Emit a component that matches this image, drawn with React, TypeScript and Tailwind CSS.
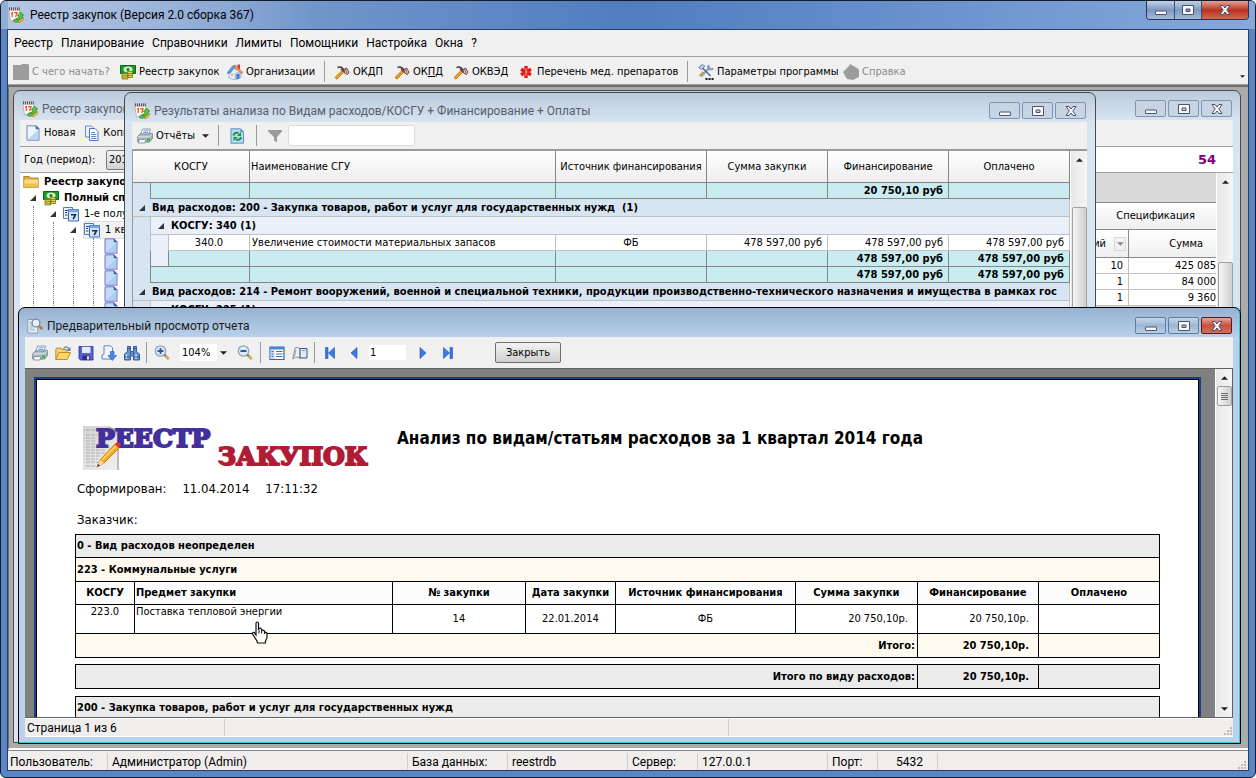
import type { ReactNode } from "react";

/* ---------- icons ---------- */

function Svg({ children, s = 16 }: { children: ReactNode; s?: number }) {
  return (
    <svg viewBox="0 0 16 16" width={s} height={s} className="shrink-0" aria-hidden="true">
      {children}
    </svg>
  );
}

const AppIcon = () => (
  <Svg>
    <path d="M.5 1.500h11l1.500 11-10.500 1.500z" fill="#fbfbfb" stroke="#a9a9b2" strokeWidth=".8" />
    <path d="M.6 1.500h11l.4 2.500H1z" fill="#c9c9cf" />
    <path d="M1.500.3v3M3.500.3v3M5.500.3v3M7.500.3v3M9.500.3v3M11.300.3v3" stroke="#4c4c54" strokeWidth=".9" />
    <path d="M3 6.200l1.300-.7v4.500M6 5.700h3L7.700 10" fill="none" stroke="#ea5a1e" strokeWidth="1.300" />
    <path d="M7.500 12l3-1.500v-2H9.300L12.500 5l3.200 3.200h-1.400v3l-4.300 2.500z" fill="#58c244" stroke="#227a1c" strokeWidth=".6" />
    <path d="M8.500 13.500q3.500 1 7-3l.3 1.700q-2 3-5 3.600z" fill="#f2c838" stroke="#a4791a" strokeWidth=".6" />
    <ellipse cx="8" cy="13.700" rx="2.800" ry="1.500" fill="#5fbf4a" stroke="#2a7a22" strokeWidth=".6" />
  </Svg>
);
const MoneyIcon = () => (
  <Svg>
    <path d="M.5 1.500h15v8h-15z" fill="#1d9a2b" stroke="#086a14" />
    <ellipse cx="8" cy="5.500" rx="4.500" ry="3" fill="#d3f2c4" />
    <circle cx="8" cy="5.500" r="1.500" fill="#1d7a2b" />
    <path d="M2 9.500h6v5.500H2zM7.500 7.500h5V13.500h-5z" fill="#e7d84a" stroke="#80751b" strokeWidth=".8" />
    <path d="M2 11.300h6M2 13.200h6M8 9.500h5M8 11.500h5" stroke="#80751b" strokeWidth=".8" />
  </Svg>
);
const HouseIcon = () => (
  <Svg>
    <path d="M10.500.5h2.500v5h-2.500z" fill="#c0462a" />
    <path d="M2 8.500L6 4l8 4v5.500L8 16l-6-2z" fill="#e8f0fb" stroke="#7e95b8" strokeWidth=".6" />
    <path d="M7.500 9l6.500-1.500v6L7.500 16z" fill="#a9c6ec" />
    <path d="M0 9l5.500-7L9 1.200 3 9.500z" fill="#5b96e4" stroke="#2f66b4" strokeWidth=".5" />
    <path d="M8.500 1.200L16 8.500l-1.300 1L7 3.500z" fill="#f2934a" stroke="#bf5b1c" strokeWidth=".5" />
    <path d="M9.500 10h3v4.500l-3 1z" fill="#4f7cbc" />
    <path d="M4 9.500h2v2.500H4z" fill="#f3b65c" />
  </Svg>
);
const PickIcon = () => (
  <Svg>
    <path d="M1 13.500l7-7 1.800 1.700-6.800 7z" fill="#f0a01c" stroke="#a5660c" strokeWidth=".7" />
    <path d="M3.500 3.500c3.500-1.500 6 .5 7 4.500" fill="none" stroke="#4e3a36" strokeWidth="1.500" />
    <path d="M7 4.500l2.500 3" stroke="#6a3a28" strokeWidth="1.600" />
    <path d="M10 5.500l2.500-1.500 2.500 4-1.500 2.500-3-1.500z" fill="#d9cdcd" stroke="#573434" strokeWidth=".9" />
    <path d="M11.500 5l1.500 4" stroke="#9e4d4d" strokeWidth=".9" />
  </Svg>
);
const MedIcon = () => (
  <Svg>
    <g stroke="#e01818" strokeWidth="3.400">
      <path d="M8 2v12M3 5.200l10 5.600M13 5.200L3 10.800" />
    </g>
    <path d="M8 4v8M7 6.500q2 0 2 1.500t-2 1.500" stroke="#ff9c9c" fill="none" strokeWidth=".9" />
  </Svg>
);
const ToolsIcon = () => (
  <Svg>
    <path d="M3 12.500L12 3" stroke="#8ea2c0" strokeWidth="2.200" />
    <path d="M11 1.200q-2 2 0 3.600 2 1.500 4.200-.5" fill="none" stroke="#7f97ba" strokeWidth="1.800" />
    <path d="M3.500 3l9 9" stroke="#5a6b85" strokeWidth="1.600" />
    <path d="M.5 3.500L4 .5l3 1.500-3.500 3.500z" fill="#b9c9de" stroke="#5d77a0" strokeWidth=".8" />
    <path d="M1.500 12l4-4" stroke="#c99c4a" strokeWidth="2" />
    <path d="M7.500 14h2v2h-2zM10.500 14h2v2h-2zM13.500 14h2v2h-2z" fill="#111" />
  </Svg>
);
const DocIcon = ({ blue = false }: { blue?: boolean }) => (
  <Svg>
    <path d="M2 .8h9l3 3v11.400H2z" fill={blue ? "#c5dcf8" : "#eef4fd"} stroke={blue ? "#7c6fc0" : "#7189b8"} />
    <path d="M3 14.500l10.500-10v10z" fill="#9cc0f0" opacity=".6" />
    <path d="M11 .8v3h3z" fill="#3f6cb8" stroke="#3f5f9d" strokeWidth=".8" />
  </Svg>
);
const CopyIcon = () => (
  <Svg>
    <path d="M1.500 1h6l1.500 1.500V12H1.500z" fill="#eaf2fc" stroke="#6b8cbf" />
    <path d="M5.500 3.500h5.500l3 3v9h-8.500z" fill="#fff" stroke="#4d76b3" />
    <path d="M7 7.500h4M7 9.500h5.500M7 11.500h5.500M7 13.500h5.500" stroke="#5f8fd0" />
  </Svg>
);
const PrintIcon = () => (
  <Svg>
    <path d="M5.500 1h8L11.500 7h-8z" fill="#fff" stroke="#7e8ea6" strokeWidth=".9" />
    <path d="M6.500 2.800h5M6 4.500h5" stroke="#6da0df" />
    <path d="M.8 8.500L3.500 6h9L15.300 5v5.500L12.500 14H.8z" fill="#b4bdc9" stroke="#65738a" strokeWidth=".9" />
    <path d="M.8 8.700h11.700L15.300 5.300" fill="none" stroke="#dfe5ec" strokeWidth=".9" />
    <path d="M2 11.500h7l-1 3.500H1.500z" fill="#f6f8fb" stroke="#76849b" strokeWidth=".8" />
    <path d="M10 10h3v3h-3z" fill="#36c23a" />
  </Svg>
);
const RefreshIcon = () => (
  <Svg>
    <path d="M2 .8h9.500L14.500 4v11.200H2z" fill="#bcd8f8" stroke="#5f8ecc" />
    <path d="M11.500.8V4h3z" fill="#4f80c6" />
    <path d="M4.500 7.500q.5-3.500 5-2.500" fill="none" stroke="#159a28" strokeWidth="2" />
    <path d="M12 4v4H7.800z" fill="#159a28" />
    <path d="M12 9q-.5 3.500-5 2.500" fill="none" stroke="#159a28" strokeWidth="2" />
    <path d="M4.500 13V9h4.200z" fill="#159a28" />
  </Svg>
);
const FunnelIcon = () => (
  <Svg>
    <path d="M1 2h14v1.500L10 9v5.500l-3-2V9L1 3.500z" fill="#9b9b9b" />
  </Svg>
);
const FolderIcon = () => (
  <Svg>
    <path d="M.8 2.500h5.500L7.800 4h7.400v9.500H.8z" fill="#d9a93c" stroke="#a2771c" strokeWidth=".8" />
    <path d="M1.300 5.500H15v7.800H1.300z" fill="#fbdd84" />
    <path d="M1.300 9.500H15v3.800H1.300z" fill="#efbf51" />
  </Svg>
);
const CalIcon = () => (
  <Svg>
    <path d="M.5 1.500h9v11h-9z" fill="#e8f0fb" stroke="#4d7cc0" />
    <path d="M5.500 3.500h10v11.500h-10z" fill="#d3e3f8" stroke="#3d6cb5" />
    <path d="M5.500 3.500h10v2.500h-10z" fill="#7aa6e4" />
    <path d="M2 4.500h3M2 6.500h2M2 9h2.500" stroke="#26406e" strokeWidth="1.200" />
    <path d="M8 8.700h4.500l-2.300 4.500" fill="none" stroke="#1c2f52" strokeWidth="1.600" />
  </Svg>
);
const PreviewIcon = () => (
  <Svg>
    <path d="M.8 1.500h7l3 2V15h-10z" fill="#edf2f8" stroke="#8a9ab0" />
    <path d="M2.500 4h3M2.500 6h2.500M2.500 8h3M2.500 10h4M2.500 12h6" stroke="#8ea4c0" strokeWidth=".9" />
    <circle cx="9" cy="5" r="3.900" fill="#e6f1fb" stroke="#7a8797" strokeWidth="1.300" />
    <path d="M12 8l3.300 3" stroke="#c07a35" strokeWidth="2.400" />
  </Svg>
);
const OpenIcon = () => (
  <Svg>
    <path d="M.8 4.500l1-1.500H6l1 1.500h5V14H.8z" fill="#f2cf74" stroke="#b88725" strokeWidth=".9" />
    <path d="M.8 14.500L4 7.500h11.500l-3.300 7z" fill="#ffd566" stroke="#b88725" strokeWidth=".9" />
    <path d="M8.500 3.500q3-3.500 5.500.5" fill="none" stroke="#5d7fb0" strokeWidth="1.200" />
    <path d="M15.500 2v4h-4z" fill="#5d7fb0" />
  </Svg>
);
const SaveIcon = () => (
  <Svg>
    <path d="M1 1.500h14v13.500H2.500L1 13.500z" fill="#5a5fcf" stroke="#31359b" strokeWidth=".9" />
    <path d="M4 1.800h8.500V8H4z" fill="#e3e9fa" />
    <path d="M4.500 10.500h7v4.500h-7z" fill="#2c2f7c" />
    <path d="M9 11.300h2v3.200H9z" fill="#e8e8f5" />
  </Svg>
);
const ExportIcon = () => (
  <Svg>
    <path d="M3 .8h6.500l2 2V14H1V10l2-1z" fill="#f0f5fd" stroke="#6684b8" />
    <path d="M9.500 6.500h3.500v4h2.500L11.300 15.500 7 10.500h2.500z" fill="#4a8ae6" stroke="#1f55ac" strokeWidth=".6" />
  </Svg>
);
const FindIcon = () => (
  <Svg>
    <path d="M3.500 1.500h3V6.500h3v-5h3V6.500L15.500 9v6H9.500v-4h-3v4H.5V9l3-2.500z" fill="#6c93c8" stroke="#2b5290" strokeWidth=".9" />
    <path d="M3.500 3.500h3M9.500 3.500h3M6.500 7v3.500M9.500 7v3.500" stroke="#2b5290" strokeWidth=".9" />
    <path d="M2.500 9.500v4.500M12 9.500v4.500" fill="none" stroke="#d5e5f9" strokeWidth="1.400" />
    <path d="M.8 12h5.500M9.700 12h5.500" stroke="#2b5290" strokeWidth=".8" />
  </Svg>
);
const ZoomIcon = ({ plus = false }: { plus?: boolean }) => (
  <Svg>
    <circle cx="6.500" cy="6" r="5.200" fill="#dcecfb" stroke="#93a3b8" strokeWidth="1.300" />
    <path d={plus ? "M3.500 6h6M6.500 3v6" : "M3.500 6h6"} stroke="#2f5a96" strokeWidth="1.800" />
    <path d="M10.800 10l4 4.300" stroke="#dcaa58" strokeWidth="2.800" />
    <path d="M10.300 9.600l1.500 1.500" stroke="#767f8c" strokeWidth="2" />
  </Svg>
);
const OutlineIcon = () => (
  <Svg>
    <path d="M1 2h14v12.500H1z" fill="#fff" stroke="#3267b3" strokeWidth="1.200" />
    <path d="M1 2h14v2.500H1z" fill="#4984d6" />
    <path d="M1.500 5h4v9h-4z" fill="#c5daf5" />
    <path d="M2.500 6.500h2M2.500 9h2M2.500 11.500h2M7 6.500h6.500M7 9h6.500M7 11.500h6.500" stroke="#3e72b9" />
  </Svg>
);
const BookIcon = () => (
  <Svg>
    <path d="M.8 14L3 3Q5.500 1.500 8 3.500v10Q6 11.500 3.500 12z" fill="#eef1f5" stroke="#8a7f8f" strokeWidth=".9" />
    <path d="M8 3.500h7v9.500H8z" fill="#dfe9f7" stroke="#4b5666" />
    <path d="M4 5l-1.500 6M10 5.500h3.500" stroke="#7aa2d4" />
  </Svg>
);
const NavIcon = ({ kind }: { kind: "first" | "prev" | "next" | "last" }) => (
  <Svg>
    <g fill="#3b7ae6" stroke="#1d4ca8" strokeWidth=".6" transform={kind === "next" || kind === "last" ? "matrix(-1 0 0 1 16 0)" : undefined}>
      {kind === "first" || kind === "last" ? (
        <>
          <path d="M3.500 2.500h2.500v11H3.500z" />
          <path d="M12.500 2.500v11L6.500 8z" />
        </>
      ) : (
        <path d="M11 2.500v11L5 8z" />
      )}
    </g>
  </Svg>
);
const BlobIcon = ({ poly = false }: { poly?: boolean }) => (
  <Svg>
    <path d={poly ? "M0 8l6-6 1-2 7 4 2 2v7l-6 3-6-1z" : "M0 1h8l1-1h6l1 1v15H0z"} fill="#9c9c9c" />
  </Svg>
);
const Caret = ({ up = false, small = false }: { up?: boolean; small?: boolean }) => (
  <svg viewBox="0 0 8 4" width={small ? 5 : 7} height={small ? 3 : 4} className="shrink-0" aria-hidden="true">
    <path d={up ? "M0 4h8L4 0z" : "M0 0h8L4 4z"} fill="#222" />
  </svg>
);
const Expander = () => (
  <svg viewBox="0 0 6 6" width="6" height="6" className="shrink-0" aria-hidden="true">
    <path d="M6 0v6H0z" fill="#333" />
  </svg>
);
const Grip = () => (
  <svg viewBox="0 0 10 10" width="10" height="10" className="shrink-0" aria-hidden="true">
    <path d="M7 1h2v2H7zM4 4h2v2H4zM7 4h2v2H7zM1 7h2v2H1zM4 7h2v2H4zM7 7h2v2H7z" fill="#bdb9b9" />
  </svg>
);

/* ---------- shared pieces ---------- */

const glyphs: Record<string, ReactNode> = {
  Свернуть: <rect x="2.500" y="7" width="11" height="3.500" rx=".5" />,
  Развернуть: <path fillRule="evenodd" d="M2.500 1.500h11v9h-11zM6 5v2.500h4V5z" />,
  Закрыть: <path d="M3 1.500h3l2 2.500 2-2.500h3L9.800 6l3.200 4.500h-3L8 8l-2 2.500H3L6.200 6z" />,
};

function CapGlyph({ name }: { name: string }) {
  return (
    <svg viewBox="0 0 16 12" width="16" height="12" aria-hidden="true">
      <g fill="#f7f8fb" stroke="#4b5468" strokeWidth="1">
        {glyphs[name]}
      </g>
    </svg>
  );
}

function CapButtons({ active = false }: { active?: boolean }) {
  return (
    <div className="flex gap-[2px]">
      {["Свернуть", "Развернуть", "Закрыть"].map((n) => (
        <button
          key={n}
          aria-label={n}
          className={
            "flex h-[17px] w-[31px] items-center justify-center rounded-[2px] border " +
            (active
              ? n === "Закрыть"
                ? "border-[#5c1a1e] bg-linear-to-b from-[#e0a59c] via-[#c8503c] to-[#d2705c]"
                : "border-[#5f7c9f] bg-linear-to-b from-[#c4d6ea] via-[#9cb7d5] to-[#b8cfe8]"
              : "border-[#8494b0] bg-[#c6d4e4]")
          }
        >
          <CapGlyph name={n} />
        </button>
      ))}
    </div>
  );
}

function WindowTitle({ icon, text, active = false }: { icon: ReactNode; text: string; active?: boolean }) {
  return (
    <header className="flex h-[29px] shrink-0 items-center pt-[6px] pr-[1px] pl-[2px]">
      {icon}
      <h2 className={"ml-[4px] flex-1 truncate font-['Roboto',sans-serif] text-[12px] " + (active ? "text-[#1a1a1a]" : "text-[#56606c]")}>{text}</h2>
      <CapButtons active={active} />
    </header>
  );
}

function ToolButton({ icon, label, className = "" }: { icon: ReactNode; label: ReactNode; className?: string }) {
  return (
    <button className={"flex shrink-0 items-center gap-[3px] whitespace-nowrap " + className}>
      {icon}
      <span>{label}</span>
    </button>
  );
}

const Sep = ({ className = "" }: { className?: string }) => <span className={"h-[21px] w-px shrink-0 bg-[#9a9a9a] " + className} />;

function VScroll({ thumb, grip = false, down = false }: { thumb: string; grip?: boolean; down?: boolean }) {
  return (
    <div className="flex w-[17px] shrink-0 flex-col items-center border-l border-white bg-linear-to-r from-[#e8e8e8] to-[#f5f5f5]">
      <div className="flex h-[17px] shrink-0 items-center">
        <Caret up />
      </div>
      <div className={"flex w-[15px] shrink-0 items-center justify-center rounded-[2px] border border-[#a0a0a0] bg-linear-to-r from-[#f6f6f6] to-[#cfcfcf] " + thumb}>
        {grip && (
          <span className="flex flex-col gap-px">
            {[0, 1, 2, 3].map((i) => (
              <span key={i} className="h-px w-[7px] bg-[#6a6a6a]" />
            ))}
          </span>
        )}
      </div>
      {down && (
        <div className="mt-auto flex h-[17px] shrink-0 items-center">
          <Caret />
        </div>
      )}
    </div>
  );
}

/* ---------- main frame ---------- */

const menus = ["Реестр", "Планирование", "Справочники", "Лимиты", "Помощники", "Настройка", "Окна", "?"];

function MainToolbar() {
  return (
    <div className="flex h-[28px] shrink-0 items-center border-b border-[#a0a0a0] pt-[2px] pl-[5px]">
      <ToolButton className="w-[107px] text-[#8a8a8a]" icon={<BlobIcon />} label="С чего начать?" />
      <ToolButton className="w-[107px]" icon={<MoneyIcon />} label="Реестр закупок" />
      <ToolButton className="w-[97px]" icon={<HouseIcon />} label="Организации" />
      <Sep className="mr-[9px]" />
      <ToolButton className="w-[60px]" icon={<PickIcon />} label={<>ОК<u>Д</u>П</>} />
      <ToolButton className="w-[59px]" icon={<PickIcon />} label={<>ОК<u>П</u>Д</>} />
      <ToolButton className="w-[65px]" icon={<PickIcon />} label="ОКВЭД" />
      <ToolButton className="w-[169px]" icon={<MedIcon />} label="Перечень мед. препаратов" />
      <Sep className="mr-[10px]" />
      <ToolButton className="w-[145px]" icon={<ToolsIcon />} label="Параметры программы" />
      <ToolButton className="text-[#8a8a8a]" icon={<BlobIcon poly />} label="Справка" />
      <button aria-label="Ещё" className="mt-[10px] mr-[3px] ml-auto">
        <Caret small />
      </button>
    </div>
  );
}

const statusCells: [string, string][] = [
  ["Пользователь:", "w-[100px] pl-[2px]"],
  ["Администратор (Admin)", "w-[300px] pl-[4px]"],
  ["База данных:", "w-[100px] pl-[4px]"],
  ["reestrdb", "w-[120px] pl-[4px]"],
  ["Сервер:", "w-[70px] pl-[4px]"],
  ["127.0.0.1", "w-[130px] pl-[4px]"],
  ["Порт:", "w-[50px] pl-[4px]"],
  ["5432", "w-[60px] pl-[18px]"],
];

function MainStatus() {
  return (
    <footer className="flex h-[20px] shrink-0 items-stretch border-t border-[#8a8a8a] bg-[#f0eded] pt-[2px] font-['Roboto',sans-serif] text-[12px]">
      {statusCells.map(([t, w]) => (
        <span key={t} className={"flex shrink-0 items-center border-r border-[#cfcccc] whitespace-nowrap " + w}>
          {t}
        </span>
      ))}
      <span className="ml-auto self-end pr-[1px]">
        <Grip />
      </span>
    </footer>
  );
}

/* ---------- registry window ---------- */

function TreeRow({ depth, icon, text, bold = false, open = false, selected = false }: { depth: number; icon: ReactNode; text?: string; bold?: boolean; open?: boolean; selected?: boolean }) {
  return (
    <li className="flex h-[16px] items-center whitespace-nowrap">
      {Array.from({ length: depth }, (_, i) => (
        <span key={i} className="flex h-full w-[20px] shrink-0 items-center justify-center">
          {open && i === depth - 1 ? <Expander /> : depth > 1 && <span className="h-full border-l border-dotted border-[#888]" />}
        </span>
      ))}
      <span className={"flex items-center gap-[5px] " + (bold ? "font-bold " : "") + (selected ? "rounded-[2px] border border-[#ddd] bg-[#f2f2f2]" : "")}>
        {icon}
        {text}
      </span>
    </li>
  );
}

function RegistryWindow() {
  return (
    <section className="absolute top-[3px] right-[7px] bottom-[5px] left-[4px] flex flex-col overflow-hidden rounded-t-[7px] border border-[#4a4a4a] bg-[#d7e4f2] bg-linear-to-b from-[#bccbdb] to-[#d7e4f2] to-[30px] pr-[7px] pb-[7px] pl-[6px]">
      <WindowTitle icon={<AppIcon />} text="Реестр закупок" />
      <div className="flex h-[27px] shrink-0 items-center gap-[9px] border-b border-[#a0a0a0] bg-[#f0f0f0] pl-[5px]">
        <ToolButton icon={<DocIcon />} label="Новая" />
        <ToolButton icon={<CopyIcon />} label="Копия" />
      </div>
      <div className="flex h-[26px] shrink-0 items-center border-b border-[#a0a0a0] bg-white">
        <div className="flex h-full w-[300px] items-center bg-[#f0f0f0] pl-[4px]">
          <label htmlFor="year" className="w-[82px]">
            Год (период):
          </label>
          <select id="year" className="h-[20px] w-[70px] appearance-none rounded-[2px] border border-[#7c7c7c] bg-linear-to-b from-[#f2f2f2] to-[#d2d2d2] px-[2px]">
            <option>2014</option>
          </select>
        </div>
        <strong className="ml-auto pr-[17px] font-['DejaVu_Sans',sans-serif] text-[13px] text-[#800080]">54</strong>
      </div>
      <div className="flex min-h-0 flex-1 bg-white">
        <ul className="min-w-0 flex-1 overflow-hidden pt-px pl-[3px]">
          <TreeRow depth={0} icon={<FolderIcon />} text="Реестр закупок" bold />
          <TreeRow depth={1} icon={<MoneyIcon />} text="Полный список" bold open />
          <TreeRow depth={2} icon={<CalIcon />} text="1-е полугодие" open />
          <TreeRow depth={3} icon={<CalIcon />} text="1 квартал" open selected />
          {[0, 1, 2, 3, 4].map((i) => (
            <TreeRow key={i} depth={4} icon={<DocIcon blue />} />
          ))}
        </ul>
        <div className="flex w-[300px] shrink-0 flex-col bg-[#d9d9d9] pt-[29px]">
          <table className="w-full table-fixed border-separate border-spacing-0 bg-white text-right">
            <colgroup>
              <col />
              <col className="w-[87px]" />
            </colgroup>
            <thead>
              <tr className="h-[28px] bg-linear-to-b from-white to-[#eee]">
                <th colSpan={2} className="border-y border-[#8a8a8a] pr-[21px] text-right font-normal">
                  Спецификация
                </th>
              </tr>
              <tr className="h-[28px] bg-linear-to-b from-white to-[#eee]">
                <th className="border-r border-b border-[#8a8a8a] font-normal">
                  <span className="flex items-center justify-end gap-[8px] pr-[2px]">
                    Общий
                    <button aria-label="Фильтр" className="flex h-[14px] w-[12px] items-center justify-center border border-[#bbb] bg-[#eee] opacity-50">
                      <Caret />
                    </button>
                  </span>
                </th>
                <th className="border-b border-[#8a8a8a] pr-[13px] text-right font-normal">Сумма</th>
              </tr>
            </thead>
            <tbody>
              {[
                ["10", "425 085"],
                ["1", "84 000"],
                ["1", "9 360"],
              ].map(([a, b], i) => (
                <tr key={i} className="h-[16px]">
                  <td className="border-r border-b border-[#c0c0c0] pr-[5px]">{a}</td>
                  <td className="border-b border-[#c0c0c0]">{b}</td>
                </tr>
              ))}
            </tbody>
          </table>
        </div>
        <VScroll thumb="mt-[72px] h-[160px]" />
      </div>
    </section>
  );
}

/* ---------- analysis window ---------- */

const line = "border-r border-b border-[#868686] ";
const soft = "border-r border-b border-[#c0c0c0] ";

function TotalRow({ indent, a, b }: { indent: 1 | 2; a: string; b: string }) {
  return (
    <tr className="h-[16px] bg-[#c9ecf1] font-bold">
      <td className="border-r border-[#868686] bg-[#d7e4f2]" />
      {indent === 2 && <td className="border-r border-b border-[#868686] bg-[#e9f0f9]" />}
      <td colSpan={indent === 2 ? 1 : 2} className={line} />
      <td className={line} />
      <td className={line} />
      <td className={line} />
      <td className={line + "pr-[5px] text-right"}>{a}</td>
      <td className={line + "pr-[5px] text-right"}>{b}</td>
    </tr>
  );
}

function GroupRow({ text }: { text: string }) {
  return (
    <tr className="h-[18px] bg-[#d7e4f2] font-bold">
      <td colSpan={8} className="border-r border-b border-[#c0c0c0] pl-[6px]">
        <span className="flex items-center gap-[7px] overflow-hidden whitespace-nowrap">
          <Expander />
          {text}
        </span>
      </td>
    </tr>
  );
}

function SubGroupRow({ text }: { text: string }) {
  return (
    <tr className="h-[18px] font-bold">
      <td className="border-r border-[#c0c0c0] bg-[#d7e4f2]" />
      <td colSpan={7} className="border-r border-b border-[#c0c0c0] bg-[#e9f0f9] pl-[7px]">
        <span className="flex items-center gap-[7px]">
          <Expander />
          {text}
        </span>
      </td>
    </tr>
  );
}

function AnalysisWindow() {
  return (
    <section className="absolute top-[5px] left-[115px] flex h-[640px] w-[972px] flex-col overflow-hidden rounded-t-[7px] border border-[#4a4a4a] bg-[#d7e4f2] bg-linear-to-b from-[#bccbdb] to-[#d7e4f2] to-[30px] pr-[8px] pb-[7px] pl-[7px]">
      <WindowTitle icon={<AppIcon />} text="Результаты анализа по Видам расходов/КОСГУ + Финансирование + Оплаты" />
      <div className="flex h-[27px] shrink-0 items-center bg-[#f0f0f0] pl-[5px]">
        <ToolButton
          className="w-[81px]"
          icon={<PrintIcon />}
          label={
            <span className="flex items-center gap-[7px]">
              Отчёты <Caret />
            </span>
          }
        />
        <Sep className="mr-[10px]" />
        <button aria-label="Обновить">
          <RefreshIcon />
        </button>
        <Sep className="mr-[10px] ml-[11px]" />
        <button aria-label="Фильтр">
          <FunnelIcon />
        </button>
        <input aria-label="Поиск" className="ml-[5px] h-[21px] w-[127px] rounded-[2px] border border-[#dcdcdc] bg-white px-[3px]" />
      </div>
      <div className="flex min-h-0 flex-1 overflow-hidden border-t-2 border-l border-[#9a9a9a] bg-white">
        <div className="min-w-0 flex-1 overflow-hidden">
          <table className="w-full table-fixed border-separate border-spacing-0">
            <colgroup>
              <col className="w-[18px]" />
              <col className="w-[18px]" />
              <col className="w-[81px]" />
              <col />
              <col className="w-[151px]" />
              <col className="w-[121px]" />
              <col className="w-[121px]" />
              <col className="w-[121px]" />
            </colgroup>
            <thead>
              <tr className="h-[32px] bg-linear-to-b from-white to-[#ededed] whitespace-nowrap">
                <th colSpan={3} className={line + "font-normal"}>КОСГУ</th>
                <th className={line + "pl-px text-left font-normal"}>Наименование СГУ</th>
                <th className={line + "font-normal"}>Источник финансирования</th>
                <th className={line + "font-normal"}>Сумма закупки</th>
                <th className={line + "font-normal"}>Финансирование</th>
                <th className={line + "font-normal"}>Оплачено</th>
              </tr>
            </thead>
            <tbody>
              <TotalRow indent={1} a="20 750,10 руб" b="" />
              <GroupRow text={"Вид расходов: 200 - Закупка товаров, работ и услуг для государственных нужд \u00a0(1)"} />
              <SubGroupRow text="КОСГУ: 340 (1)" />
              <tr className="h-[16px] bg-white">
                <td className="border-r border-[#c0c0c0] bg-[#d7e4f2]" />
                <td className="border-r border-[#c0c0c0] bg-[#e9f0f9]" />
                <td className={soft + "text-center"}>340.0</td>
                <td className={soft + "pl-[2px]"}>Увеличение стоимости материальных запасов</td>
                <td className={soft + "text-center"}>ФБ</td>
                <td className={soft + "pr-[5px] text-right"}>478 597,00 руб</td>
                <td className={soft + "pr-[5px] text-right"}>478 597,00 руб</td>
                <td className={soft + "pr-[5px] text-right"}>478 597,00 руб</td>
              </tr>
              <TotalRow indent={2} a="478 597,00 руб" b="478 597,00 руб" />
              <TotalRow indent={1} a="478 597,00 руб" b="478 597,00 руб" />
              <GroupRow text="Вид расходов: 214 - Ремонт вооружений, военной и специальной техники, продукции производственно-технического назначения и имущества в рамках гос" />
              <SubGroupRow text="КОСГУ: 225 (1)" />
            </tbody>
          </table>
        </div>
        <VScroll thumb="mt-[39px] h-[180px]" />
      </div>
    </section>
  );
}

/* ---------- report preview window ---------- */

function Logo() {
  return (
    <div className="relative h-[46px] w-[300px] shrink-0">
      <svg viewBox="0 0 40 46" width="40" height="46" aria-hidden="true">
        <defs>
          <linearGradient id="sheet" x1="0" x2="1" y1="0" y2="1">
            <stop offset="0" stopColor="#d2d2d2" />
            <stop offset="1" stopColor="#f0f0f0" />
          </linearGradient>
        </defs>
        <path d="M0 1h26l9 8v36H0z" fill="url(#sheet)" />
        <path d="M34 9h2v36h-2z" fill="#bdbdbd" />
        <path d="M24 1l10 9V4z" fill="#b9b9b9" />
        <path d="M3 5h12M3 10h11M3 13h10M3 16h10M3 19h10M3 22h24M3 25h20M3 28h20M3 31h14M3 34h12M3 37h12M3 41h10" stroke="#b0b0b0" strokeWidth="1" strokeDasharray="4 1" />
      </svg>
      <p className="absolute top-[1px] left-[13px] font-['DejaVu_Serif',serif] text-[25px] leading-[26px] font-bold text-[#44309a] [-webkit-text-stroke:2px_#44309a]">РЕЕСТР</p>
      <p className="absolute top-[19px] left-[135px] font-['DejaVu_Serif',serif] text-[25px] leading-[26px] font-bold whitespace-nowrap text-[#b01c34] [-webkit-text-stroke:2px_#b01c34]">ЗАКУПОК</p>
      <svg viewBox="0 0 26 28" width="26" height="28" className="absolute top-[16px] left-[13px]" aria-hidden="true">
        <path d="M1 26l3-7L19 3l4 4L8 22z" fill="#f7a81c" stroke="#c4740c" strokeWidth=".8" />
        <path d="M19 3l2-2q3 0 4 3l-2 3z" fill="#d8343c" />
        <path d="M6 19L20 5" stroke="#ffdb6b" strokeWidth="1.500" />
        <path d="M1 26l3-7 4 3z" fill="#f5dcb0" />
        <path d="M1 26l1-3 2 1.500z" fill="#333" />
      </svg>
    </div>
  );
}

const bk = "border-r border-b border-black px-[1px] ";

function Report() {
  return (
    <article className="border-2 border-[#1f3d87] bg-white">
      <div className="border border-b-0 border-black px-[38px]">
        <div className="flex items-start pt-[45px] pl-[8px]">
          <Logo />
          <h1 className="ml-[14px] pt-[3px] text-[17px] leading-[20px] font-bold whitespace-nowrap">Анализ по видам/статьям расходов за 1 квартал 2014 года</h1>
        </div>
        <p className="flex gap-[16px] pt-[8px] pl-[2px] text-[13px] leading-[20px]">
          <span>Сформирован:</span>
          <span>11.04.2014</span>
          <span>17:11:32</span>
        </p>
        <p className="pt-[11px] pl-[2px] text-[13px] leading-[20px]">Заказчик:</p>
        <table className="mt-[4px] w-full table-fixed border-separate border-spacing-0 border-t border-l border-black">
          <colgroup>
            <col className="w-[59px]" />
            <col />
            <col className="w-[133px]" />
            <col className="w-[90px]" />
            <col className="w-[180px]" />
            <col className="w-[122px]" />
            <col className="w-[121px]" />
            <col className="w-[121px]" />
          </colgroup>
          <tbody>
            <tr className="h-[23px] bg-[#ebebeb]">
              <th colSpan={8} className={bk + "text-left"}>0 - Вид расходов неопределен</th>
            </tr>
            <tr className="h-[24px] bg-[#fffaf0]">
              <th colSpan={8} className={bk + "text-left"}>223 - Коммунальные услуги</th>
            </tr>
            <tr className="h-[23px] bg-[#fcfcfc] whitespace-nowrap">
              <th className={bk}>КОСГУ</th>
              <th className={bk + "text-left"}>Предмет закупки</th>
              <th className={bk}>№ закупки</th>
              <th className={bk}>Дата закупки</th>
              <th className={bk}>Источник финансирования</th>
              <th className={bk}>Сумма закупки</th>
              <th className={bk}>Финансирование</th>
              <th className={bk}>Оплачено</th>
            </tr>
            <tr className="h-[29px]">
              <td className={bk + "text-center align-top"}>223.0</td>
              <td className={bk + "align-top"}>Поставка тепловой энергии</td>
              <td className={bk + "text-center"}>14</td>
              <td className={bk + "text-center"}>22.01.2014</td>
              <td className={bk + "text-center"}>ФБ</td>
              <td className={bk + "pr-[9px] text-right"}>20 750,10р.</td>
              <td className={bk + "pr-[9px] text-right"}>20 750,10р.</td>
              <td className={bk} />
            </tr>
            <tr className="h-[24px] bg-[#fffaf0] font-bold">
              <td colSpan={6} className={bk + "pr-[2px] text-right"}>Итого:</td>
              <td className={bk + "pr-[9px] text-right"}>20 750,10р.</td>
              <td className={bk} />
            </tr>
          </tbody>
        </table>
        <table className="mt-[6px] w-full table-fixed border-separate border-spacing-0 border-t border-l border-black">
          <colgroup>
            <col />
            <col className="w-[121px]" />
            <col className="w-[121px]" />
          </colgroup>
          <tbody>
            <tr className="h-[24px] bg-[#ebebeb] font-bold">
              <td className={bk + "pr-[2px] text-right"}>Итого по виду расходов:</td>
              <td className={bk + "pr-[9px] text-right"}>20 750,10р.</td>
              <td className={bk} />
            </tr>
          </tbody>
        </table>
        <h3 className="mt-[7px] h-[24px] border border-black bg-[#ebebeb] px-[1px] leading-[22px] font-bold">200 - Закупка товаров, работ и услуг для государственных нужд</h3>
      </div>
    </article>
  );
}

function HandCursor() {
  return (
    <svg viewBox="0 0 18 23" width="18" height="23" className="absolute top-[252px] left-[226px]" aria-hidden="true">
      <path d="M5 14V2.500Q5 1 6.200 1t1.300 1.500V9l.3-1.500q1.700-.8 2.700.8l.3 1.200q1.600-1 2.800.8v1.200q1.900-.7 2.400 1v4l-1.500 3.500V22H6.500l-.5-2-4.500-7Q1 11 3 11.300z" fill="#fff" stroke="#111" strokeWidth="1.200" />
      <path d="M8 9v3.500M10.700 9.500v3M13.500 11v2" stroke="#111" />
    </svg>
  );
}

function PreviewWindow() {
  const tool = (label: string, icon: ReactNode, cls = "") => (
    <button aria-label={label} className={"flex w-[23px] shrink-0 items-center justify-center " + cls}>
      {icon}
    </button>
  );
  return (
    <section className="absolute top-[220px] right-[7px] bottom-[4px] left-[9px] flex flex-col overflow-hidden rounded-t-[7px] border border-black bg-[#b9d1ea] bg-linear-to-b from-[#98b2d1] to-[#b9d1ea] to-[30px] pr-[7px] pb-[6px] pl-[6px] shadow-[inset_0_-1px_0_#35c8dc,inset_-1px_0_0_#35c8dc]">
      <WindowTitle icon={<PreviewIcon />} text="Предварительный просмотр отчета" active />
      <div className="flex h-[31px] shrink-0 items-center bg-[#f0f0f0] pl-[3px]">
        {tool("Печать", <PrintIcon />)}
        {tool("Открыть", <OpenIcon />)}
        {tool("Сохранить", <SaveIcon />)}
        {tool("Экспорт", <ExportIcon />)}
        {tool("Найти", <FindIcon />)}
        <Sep className="mx-[3px]" />
        {tool("Увеличить", <ZoomIcon plus />)}
        <label className="ml-[7px] flex h-[17px] w-[50px] items-center bg-white pl-[2px]">
          <input aria-label="Масштаб" defaultValue="104%" className="w-[35px] bg-transparent outline-none" />
          <span className="flex h-full flex-1 items-center justify-center bg-[#f0f0f0]">
            <Caret />
          </span>
        </label>
        {tool("Уменьшить", <ZoomIcon />, "ml-[3px]")}
        <Sep className="mx-[4px]" />
        {tool("Структура", <OutlineIcon />)}
        {tool("Разворот", <BookIcon />)}
        <Sep className="mx-[3px]" />
        {tool("Первая страница", <NavIcon kind="first" />)}
        {tool("Предыдущая страница", <NavIcon kind="prev" />, "ml-[1px]")}
        <input aria-label="Страница" defaultValue="1" className="ml-[4px] h-[15px] w-[37px] bg-white px-px outline-none" />
        {tool("Следующая страница", <NavIcon kind="next" />, "ml-[5px]")}
        {tool("Последняя страница", <NavIcon kind="last" />, "ml-[2px]")}
        <button className="ml-[36px] h-[21px] w-[66px] shrink-0 rounded-[2px] border border-[#707070] bg-linear-to-b from-[#f3f3f3] to-[#cfcfcf]">Закрыть</button>
      </div>
      <div className="relative flex min-h-0 flex-1 border-y border-r border-[#606060] bg-[#808080]">
        <div className="min-w-0 flex-1 overflow-hidden pt-[8px] pr-[14px] pl-[9px]">
          <Report />
        </div>
        <VScroll thumb="h-[20px]" grip down />
        <HandCursor />
      </div>
      <footer className="flex h-[19px] shrink-0 items-stretch border-y border-white bg-[#f0eded] font-['Roboto',sans-serif] text-[12px]">
        <span className="flex w-[200px] items-center border-r border-[#cfcccc] pl-[2px]">Страница 1 из 6</span>
        <span className="w-[504px] border-r border-[#cfcccc]" />
        <span className="ml-auto self-end">
          <Grip />
        </span>
      </footer>
    </section>
  );
}

/* ---------- application ---------- */

export default function App() {
  return (
    <div className="flex h-screen w-full flex-col overflow-hidden rounded-[6px] border border-[#141c2c] bg-[#5a86c8] px-[6px] pb-[6px] font-['DejaVu_Sans_Condensed','DejaVu_Sans',sans-serif] text-[11px] leading-[14px] text-black">
      <header className="-mx-[6px] flex h-[28px] shrink-0 items-start bg-linear-to-r from-[#93aed6] via-[#4f7dc0] to-[#86a9dc] pl-[7px]">
        <div className="flex h-full items-center bg-linear-to-r from-[#b4c6e2] to-transparent pr-[60px]">
          <AppIcon />
          <h1 className="ml-[6px] font-['Roboto',sans-serif] text-[12px] whitespace-nowrap">Реестр закупок (Версия 2.0 сборка 367)</h1>
        </div>
        <div className="mr-[6px] ml-auto flex h-[19px] overflow-hidden rounded-b-[4px] border border-t-0 border-[#26344f]">
          <button aria-label="Свернуть" className="flex w-[28px] items-center justify-center border-r border-[#3c4f72] bg-linear-to-b from-[#c3d2e8] via-[#7d98c0] to-[#a2bbde]">
            <CapGlyph name="Свернуть" />
          </button>
          <button aria-label="Развернуть" className="flex w-[27px] items-center justify-center border-r border-[#3c4f72] bg-linear-to-b from-[#c3d2e8] via-[#7d98c0] to-[#a2bbde]">
            <CapGlyph name="Развернуть" />
          </button>
          <button aria-label="Закрыть" className="flex w-[46px] items-center justify-center bg-linear-to-b from-[#e0a196] via-[#b8301c] to-[#d4694f]">
            <CapGlyph name="Закрыть" />
          </button>
        </div>
      </header>
      <main className="flex min-h-0 flex-1 flex-col border border-[#2b3d61] bg-[#f0f0f0]">
        <nav className="flex h-[27px] shrink-0 items-center gap-[8px] border-b border-[#a0a0a0] pl-[6px] font-['Roboto',sans-serif] text-[12px]">
          {menus.map((m) => (
            <button key={m}>{m}</button>
          ))}
        </nav>
        <MainToolbar />
        <div className="relative min-h-0 flex-1 overflow-hidden border-t-2 border-b-2 border-l border-t-[#6e6e6e] border-b-white border-l-[#6e6e6e] bg-[#ababab]">
          <RegistryWindow />
          <AnalysisWindow />
          <PreviewWindow />
        </div>
        <MainStatus />
      </main>
    </div>
  );
}
